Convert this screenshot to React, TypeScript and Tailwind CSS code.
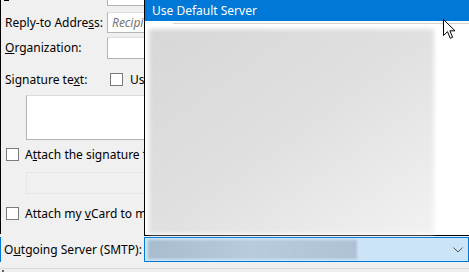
import React from "react";

/* small Windows-style pieces */
function Box({ className = "" }: { className?: string }) {
  return <div className={"h-[13px] w-[13px] shrink-0 border border-[#7a7a7a] bg-white " + className} />;
}

function Cursor() {
  return (
    <svg className="absolute left-[443px] top-[19px]" width="14" height="21" viewBox="0 0 14 21">
      <path
        d="M0.5 0.5 L0.5 16.5 L4.5 12.7 L7.3 19.3 L9.6 18.3 L6.9 11.8 L12 11.8 Z"
        fill="white"
        stroke="black"
        strokeWidth="1"
        strokeLinejoin="miter"
      />
    </svg>
  );
}

export default function App() {
  return (
    <div className="relative h-[272px] w-[469px] overflow-hidden bg-[#f0f0f0] font-['Noto_Sans',sans-serif] text-[12px] leading-none text-black">
      {/* form column */}
      <div className="h-[234px] border-l border-black">
        <div className="relative h-[6px]">
          <span className="absolute left-[3px] top-0 h-px w-[5px] bg-black" />
          <div className="ml-[106px] h-[6px] w-[60px] border-b border-l border-[#b5b5b5] bg-white" />
        </div>

        <div className="mt-[6px] flex h-[21px] items-center">
          <span className="w-[106px] shrink-0 pl-[4px]">
            Reply-to Addre<u>s</u>s:
          </span>
          <div className="flex h-[21px] flex-1 items-center border border-[#b5b5b5] border-t-[#dcdcdc] bg-white pl-[4px] italic text-[#767676]">
            Recipients
          </div>
        </div>

        <div className="mt-[4px] flex h-[22px] items-center">
          <span className="w-[106px] shrink-0 pl-[4px]">
            <u>O</u>rganization:
          </span>
          <div className="h-[22px] flex-1 border border-[#b5b5b5] border-t-[#dcdcdc] bg-white" />
        </div>

        <div className="mt-[11px] flex h-[19px] items-center">
          <span className="w-[109px] shrink-0 pl-[4px]">
            Signature te<u>x</u>t:
          </span>
          <Box />
          <span className="ml-[7px] whitespace-nowrap">Use HTML</span>
        </div>

        <div className="ml-[25px] mt-[6px] h-[45px] border border-[#b5b5b5] border-t-[#dcdcdc] bg-white" />

        <div className="mt-[4px] flex h-[21px] items-center pl-[5px]">
          <Box />
          <span className="ml-[6px] whitespace-nowrap">
            A<u>t</u>tach the signature from a file instead
          </span>
        </div>

        <div className="ml-[25px] mt-[7px] h-[22px] border border-[#e6e6e6]" />

        <div className="mt-[9px] flex h-[21px] items-center pl-[5px]">
          <Box />
          <span className="ml-[6px] whitespace-nowrap">
            Attach my <u>v</u>Card to messages
          </span>
        </div>
      </div>

      {/* outgoing server row */}
      <div className="mt-[3px] flex h-[25px] items-stretch">
        <div className="flex w-[144px] shrink-0 items-center border-l border-[#0078d7] pl-[3px]">
          O<u>u</u>tgoing Server (SMTP):
        </div>
        <div className="flex flex-1 items-center border border-[#0078d7] bg-[#cce4f7] pl-[3px] pr-[5px]">
          <div className="h-[19px] w-[209px] bg-gradient-to-r from-[#a9bccf] via-[#b8cbdc] to-[#afc2d5] blur-[1px]" />
          <svg className="ml-auto" width="10" height="6" viewBox="0 0 10 6">
            <path d="M0.5 0.5 L5 5 L9.5 0.5" fill="none" stroke="#555555" strokeWidth="1" />
          </svg>
        </div>
      </div>

      <div className="mt-[6px] h-px bg-[#d9d9d9]" />
      <span className="ml-[2px] mt-px block h-[2px] w-[2px] bg-[#606060]" />

      {/* dropped list */}
      <div className="absolute left-[144px] right-0 top-0 h-[236px] border-b border-l border-black bg-white">
        <div className="flex h-[21px] items-center bg-[#0078d7] pl-[7px] text-white">Use Default Server</div>
        <div className="ml-[28px] mt-[2px] h-px bg-[#d4d4d4]" />
        <div className="ml-[4px] mt-[5px] h-[205px] w-[285px] bg-gradient-to-br from-[#d7d7d7] via-[#e0e0e0] to-[#f2f2f2] blur-[2px]" />
      </div>

      <Cursor />
    </div>
  );
}
